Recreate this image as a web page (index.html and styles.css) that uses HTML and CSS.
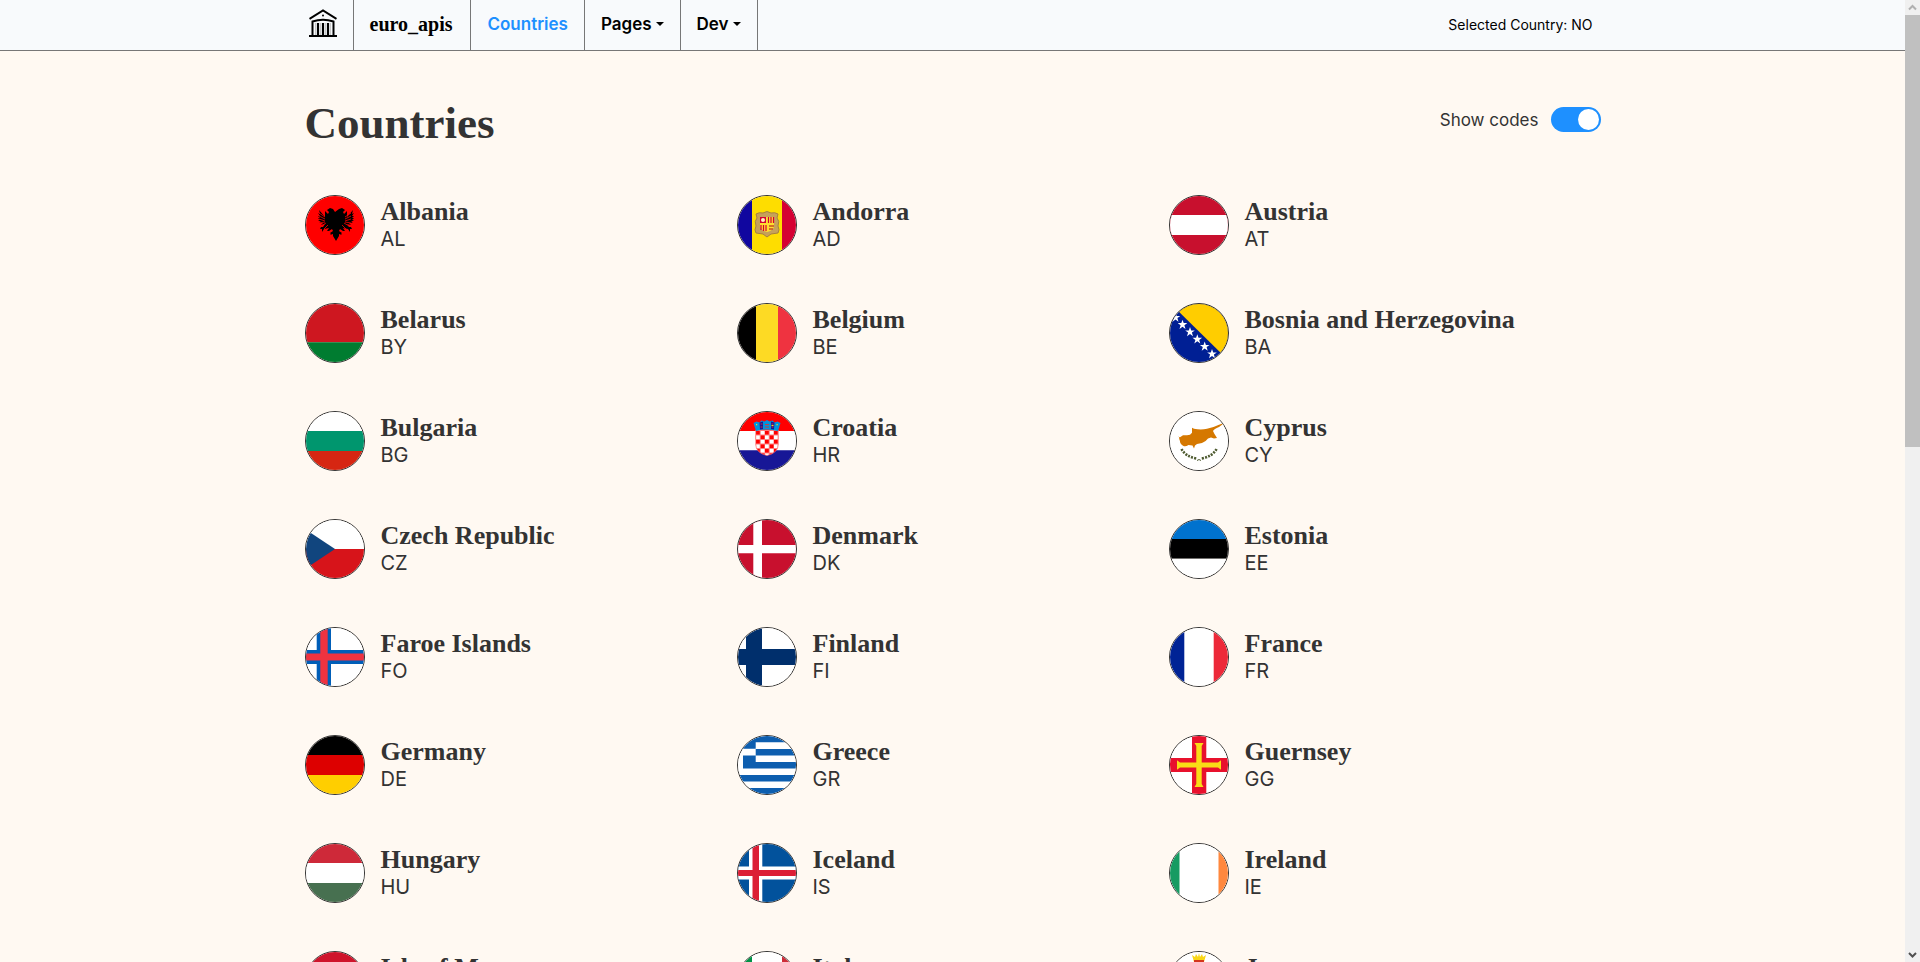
FILE: index.html
```html
<!DOCTYPE html>
<html lang="en">
<head>
<meta charset="utf-8">
<title>Countries</title>
<link rel="stylesheet" href="styles.css">
</head>
<body>
<div class="page">
<header class="navbar">
  <div class="container navbar-row">
    <nav class="nav">
      <a class="nav-item nav-logo" href="#" aria-label="Home">
        <svg width="28" height="28" viewBox="0 0 28 28" fill="none" stroke="#000" stroke-width="2"><path d="M.5 9.800 14 1.500 27.500 9.800"/><path d="M3.500 27V12.500Q14 9 24.500 12.500V27" stroke-width="2"/><path d="M9 14V26M14 14V26M19 14V26" stroke-width="2.200"/><path d="M6.500 14V26M11.500 14V26M16.500 14V26M21.500 14V26" stroke="#bbb" stroke-width=".8"/><path d="M0 27H28"/><circle cx="14" cy="6.500" r="1" fill="#000" stroke="none"/></svg>
      </a>
      <a class="nav-item nav-brand" href="#">euro_apis</a>
      <a class="nav-item nav-active" href="#">Countries</a>
      <button class="nav-item" type="button">Pages<span class="caret"></span></button>
      <button class="nav-item" type="button">Dev<span class="caret"></span></button>
    </nav>
    <div class="selected">Selected Country: NO</div>
  </div>
</header>
<main class="container main">
  <div class="heading">
    <h1 class="title">Countries</h1>
    <label class="toggle">Show codes<input class="switch" type="checkbox" role="switch" checked></label>
  </div>
  <div class="grid">
    <a class="country" href="#"><svg class="flag" viewBox="1 1 58 58"><path fill="red" d="M0 0h60v60H0z"/><path d="M30 17l-2-3-3-1-3 2 2 2-1 2-3-3v6l-6-7 1 4-2-1 2 3-2 0 2 2-2 0 2 2-2 0 3 2-2 1 4 0-2 2 4-1-2 3-2 0-1 2 2 0 0 3 2-3 5-1-2 3 2 0 3-2 1 2-3 2 1 1-1 1 3-1 0 2 3 5 3-5 0-2 3 1-1-1 1-1-3-2 1-2 3 2 2 0-2-3 5 1 2 3 0-3 2 0-1-2-2 0-2-3 4 1-2-2 4 0-2-1 3-2-2 0 2-2-2 0 2-2-2 0 2-3-2 1 1-4-6 7v-6l-3 3-1-2 2-2-3-2-3 1z"/><path stroke="red" stroke-width=".8" d="M14 18l6 4M14 21l6 3M14 24l6 2M14 28l6-1M16 31l5-3M19 34l4-4M46 18l-6 4M46 21l-6 3M46 24l-6 2M46 28l-6-1M44 31l-5-3M41 34l-4-4"/></svg><span class="info"><span class="name">Albania</span><span class="code">AL</span></span></a>
    <a class="country" href="#"><svg class="flag" viewBox="1 1 58 58"><path fill="#10069f" d="M0 0h15v60H0z"/><path fill="#fedd00" d="M15 0h30v60H15z"/><path fill="#d50032" d="M45 0h15v60H45z"/><path fill="#c6a15a" stroke="#a6803f" d="M19 19q3-2 7-1 4-3 8 0 4-1 7 1l-1 4q3 3 1 8 2 4 0 7l-7 1-4 3-4-3-7-1q-2-3 0-7-2-5 1-8z"/><path fill="#ffdd30" d="M23 22h14v9q0 4-7 6Q23 35 23 31z"/><path fill="#d50032" d="M23 22h6v6h-6z"/><circle cx="26" cy="25" r="2" fill="#fff5c0"/><path stroke="#d50032" stroke-width="1.200" d="M31.500 22v6M34 22v6M36.500 22v6M24 30v5M26.500 30v6M29 30v6"/><path stroke="#c64b22" stroke-width="1.500" d="M32 31h5M32 34h4"/></svg><span class="info"><span class="name">Andorra</span><span class="code">AD</span></span></a>
    <a class="country" href="#"><svg class="flag" viewBox="1 1 58 58"><path fill="#c8102e" d="M0 0h60v60H0z"/><path fill="#fff" d="M0 20h60v20H0z"/></svg><span class="info"><span class="name">Austria</span><span class="code">AT</span></span></a>

    <a class="country" href="#"><svg class="flag" viewBox="1 1 58 58"><path fill="#ce1720" d="M0 0h60v39.300H0z"/><path fill="#007c30" d="M0 39.300h60V60H0z"/></svg><span class="info"><span class="name">Belarus</span><span class="code">BY</span></span></a>
    <a class="country" href="#"><svg class="flag" viewBox="1 1 58 58"><path d="M0 0h19v60H0z"/><path fill="#fdda24" d="M19 0h22v60H19z"/><path fill="#ef3340" d="M41 0h19v60H41z"/></svg><span class="info"><span class="name">Belgium</span><span class="code">BE</span></span></a>
    <a class="country" href="#"><svg class="flag" viewBox="1 1 58 58"><defs><path id="star" fill="#fff" d="M0-5 1.200-1.600H4.800L1.900.6 3 4.200 0 2-3 4.200-1.900.6-4.800-1.600H-1.200z"/></defs><path fill="#001f94" d="M0 0h60v60H0z"/><path fill="#ffcd00" d="M1 0 60 58V0z"/><use href="#star" x="6.500" y="14.500"/><use href="#star" x="13.500" y="21.700"/><use href="#star" x="21" y="29"/><use href="#star" x="28.300" y="36.300"/><use href="#star" x="35.700" y="43.500"/><use href="#star" x="43" y="51"/></svg><span class="info"><span class="name">Bosnia and Herzegovina</span><span class="code">BA</span></span></a>

    <a class="country" href="#"><svg class="flag" viewBox="1 1 58 58"><path fill="#fff" d="M0 0h60v20H0z"/><path fill="#00966e" d="M0 20h60v20H0z"/><path fill="#d62612" d="M0 40h60v20H0z"/></svg><span class="info"><span class="name">Bulgaria</span><span class="code">BG</span></span></a>
    <a class="country" href="#"><svg class="flag" viewBox="1 1 58 58"><defs><pattern id="checks" x="18.750" y="19.500" width="9" height="9" patternUnits="userSpaceOnUse"><path fill="#fff" d="M0 0h9v9H0z"/><path fill="red" d="M0 0h4.500v4.500H0zM4.500 4.500H9V9H4.500z"/></pattern></defs><path fill="red" d="M0 0h60v20H0z"/><path fill="#fff" d="M0 20h60v19.300H0z"/><path fill="#171796" d="M0 39.300h60V60H0z"/><path fill="url(#checks)" stroke="#ff6a6a" stroke-width=".7" d="M18.700 19h22.600v14q0 9-11.300 11.500Q18.700 42 18.700 33z"/><path fill="#0093dd" d="M16.500 12l3-1.500 3 1 2-2 3 1 2.500-1.500 2.500 1.500 3-1 2 2 3-1 3 1.500-2.500 8q-11-3-22 0z"/><path fill="#171796" d="M22.500 11.500l3.500-1v7.500l-3 .5zM34 10.500l3.500 1-.5 7-3-.5z"/><path stroke="#d33" stroke-width=".9" d="M23.500 13h2M23.500 16h2M28 13.500h4M28 16h4M34.500 13h2M34.500 16h2"/><path fill="#f7db17" d="M19 13h1.200v1.200H19zM39.500 13h1.200v1.200h-1.200zM34.500 14h2v1h-2z"/></svg><span class="info"><span class="name">Croatia</span><span class="code">HR</span></span></a>
    <a class="country" href="#"><svg class="flag" viewBox="1 1 58 58"><path fill="#fff" d="M0 0h60v60H0z"/><path fill="#d57800" d="M9 25.500l2 .8 3-2 4 0 3-.5 2-2v-5l2 1q7 1.200 13 0 7-1.500 12-4l6-2.300-6 4.500q-5 2-6 4l1.500 3 2.500 4-3 .5-3-1-3 1q-2 3-6 4.500l-5 1-2 1.500-1 3-1.500-3-4-.5q-3 2-5 1-3.500-2-3.700-5.500-.8-2-.8-4z"/><path fill="none" stroke="#4e5b31" stroke-width="2.600" stroke-dasharray="2 1.200" d="M12.500 38q4 7.500 15 9.500M47.500 38q-4 7.500-15 9.500"/><path fill="none" stroke="#4e5b31" d="M28 49.500l2-1 2 1"/></svg><span class="info"><span class="name">Cyprus</span><span class="code">CY</span></span></a>

    <a class="country" href="#"><svg class="flag" viewBox="1 1 58 58"><path fill="#fff" d="M0 0h60v30H0z"/><path fill="#d7141a" d="M0 30h60v30H0z"/><path fill="#11457e" d="M-15 0 30 30-15 60z"/></svg><span class="info"><span class="name">Czech Republic</span><span class="code">CZ</span></span></a>
    <a class="country" href="#"><svg class="flag" viewBox="1 1 58 58"><path fill="#c8102e" d="M0 0h60v60H0z"/><path fill="#fff" d="M16.300 0h8.700v60h-8.700zM0 26h60v8.300H0z"/></svg><span class="info"><span class="name">Denmark</span><span class="code">DK</span></span></a>
    <a class="country" href="#"><svg class="flag" viewBox="1 1 58 58"><path fill="#0072ce" d="M0 0h60v20H0z"/><path d="M0 20h60v19.700H0z"/><path fill="#fff" d="M0 39.700h60V60H0z"/></svg><span class="info"><span class="name">Estonia</span><span class="code">EE</span></span></a>

    <a class="country" href="#"><svg class="flag" viewBox="1 1 58 58"><path fill="#fff" d="M0 0h60v60H0z"/><path fill="#005eb8" d="M11.700 0H26v60H11.700zM0 23h60v14H0z"/><path fill="#ef3340" d="M15.300 0h7.400v60h-7.400zM0 26.500h60v7H0z"/></svg><span class="info"><span class="name">Faroe Islands</span><span class="code">FO</span></span></a>
    <a class="country" href="#"><svg class="flag" viewBox="1 1 58 58"><path fill="#fff" d="M0 0h60v60H0z"/><path fill="#002f6c" d="M9 0h16v60H9zM0 22h60v16H0z"/></svg><span class="info"><span class="name">Finland</span><span class="code">FI</span></span></a>
    <a class="country" href="#"><svg class="flag" viewBox="1 1 58 58"><path fill="#fff" d="M0 0h60v60H0z"/><path fill="#002395" d="M0 0h15.300v60H0z"/><path fill="#ed2939" d="M44.700 0H60v60H44.700z"/></svg><span class="info"><span class="name">France</span><span class="code">FR</span></span></a>

    <a class="country" href="#"><svg class="flag" viewBox="1 1 58 58"><path d="M0 0h60v20H0z"/><path fill="#d00" d="M0 20h60v20H0z"/><path fill="#ffce00" d="M0 40h60v20H0z"/></svg><span class="info"><span class="name">Germany</span><span class="code">DE</span></span></a>
    <a class="country" href="#"><svg class="flag" viewBox="1 1 58 58"><path fill="#fff" d="M0 0h60v60H0z"/><path fill="#0d5eaf" d="M0 0h60v7.200H0zM18.700 14H60v6.400H18.700zM18.700 27H60v6.400H18.700zM0 40h60v6.400H0zM0 53h60v7H0zM0 7h18.700v6.700H0zM6 20.500h12.700v12.900H6z"/></svg><span class="info"><span class="name">Greece</span><span class="code">GR</span></span></a>
    <a class="country" href="#"><svg class="flag" viewBox="1 1 58 58"><path fill="#fff" d="M0 0h60v60H0z"/><path fill="#e8112d" d="M23 0h14.300v60H23zM0 23h60v14H0z"/><path fill="#f9dd16" d="M25.500 8h9l-1.800 3v16.500H49l3-2.200v9.400l-3-2.200H32.700V49l1.800 3h-9l1.800-3V32.500H11l-3 2.200v-9.400l3 2.200h16.300V11z"/></svg><span class="info"><span class="name">Guernsey</span><span class="code">GG</span></span></a>

    <a class="country" href="#"><svg class="flag" viewBox="1 1 58 58"><path fill="#ce2939" d="M0 0h60v20H0z"/><path fill="#fff" d="M0 20h60v20H0z"/><path fill="#477050" d="M0 40h60v20H0z"/></svg><span class="info"><span class="name">Hungary</span><span class="code">HU</span></span></a>
    <a class="country" href="#"><svg class="flag" viewBox="1 1 58 58"><path fill="#02529c" d="M0 0h60v60H0z"/><path fill="#fff" d="M12 0h13.300v60H12zM0 23.500h60v13H0z"/><path fill="#dc1e35" d="M15.500 0H22v60h-6.500zM0 27h60v6H0z"/></svg><span class="info"><span class="name">Iceland</span><span class="code">IS</span></span></a>
    <a class="country" href="#"><svg class="flag" viewBox="1 1 58 58"><path fill="#fff" d="M0 0h60v60H0z"/><path fill="#169b62" d="M0 0h10.500v60H0z"/><path fill="#ff883e" d="M49.500 0H60v60H49.500z"/></svg><span class="info"><span class="name">Ireland</span><span class="code">IE</span></span></a>

    <a class="country" href="#"><svg class="flag" viewBox="1 1 58 58"><path fill="#cf142b" d="M0 0h60v60H0z"/></svg><span class="info"><span class="name">Isle of Man</span><span class="code">IM</span></span></a>
    <a class="country" href="#"><svg class="flag" viewBox="1 1 58 58"><path fill="#fff" d="M0 0h60v60H0z"/><path fill="#009246" d="M0 0h15v60H0z"/><path fill="#ce2b37" d="M45 0h15v60H45z"/></svg><span class="info"><span class="name">Italy</span><span class="code">IT</span></span></a>
    <a class="country" href="#"><svg class="flag" viewBox="1 1 58 58"><path fill="#fff" d="M0 0h60v60H0z"/><path fill="#f9d616" d="M23 4l3 2 1-3 2 3 1-4 1 4 2-3 1 3 3-2-2 7H25z"/><path fill="#d4351c" d="M25 9h10v6H25z"/></svg><span class="info"><span class="name">Jersey</span><span class="code">JE</span></span></a>
  </div>
</main>
</div>
<div class="scrollbar" aria-hidden="true">
  <svg class="arrow" viewBox="0 0 15 15"><path d="M4 9.500 7.500 6 11 9.500" fill="none" stroke="#b0b0b0" stroke-width="2"/></svg>
  <div class="track"><div class="thumb"></div></div>
  <svg class="arrow" viewBox="0 0 15 15"><path d="M4 6 7.500 9.500 11 6" fill="none" stroke="#505050" stroke-width="2"/></svg>
</div>
</body>
</html>
```
FILE: styles.css
```css
* { box-sizing: border-box; }
body {
  margin: 0;
  height: 100vh;
  display: flex;
  overflow: hidden;
  background: #fff9f2;
  color: #333;
  font-family: Inter, "Open Sans", sans-serif;
  font-size: 17px;
}
a { color: inherit; text-decoration: none; }
.page {
  flex: 1;
  min-width: 0;
  overflow-y: auto;
  scrollbar-width: none;
}
.container {
  width: 100%;
  max-width: 1320px;
  margin: 0 auto;
  padding: 0 12px;
}
.main { padding-bottom: 48px; }
.navbar {
  background: #f8fafc;
  border-bottom: 1px solid #777;
  color: #000;
}
.navbar-row {
  display: flex;
  justify-content: space-between;
  align-items: center;
}
.nav { display: flex; height: 50px; }
.nav-item {
  display: flex;
  align-items: center;
  justify-content: center;
  padding: 0 16px 2px;
  border: 0;
  border-right: 1px solid #777;
  background: none;
  color: #000;
  font: 600 17px Inter, "Open Sans", sans-serif;
}
.nav-logo { padding: 0 16px 4px 4px; }
.nav-brand {
  padding-right: 18px;
  font: 700 20px "Liberation Serif", serif;
}
.nav-active { color: #1e90ff; }
.caret {
  margin-left: 4px;
  border: 4px solid transparent;
  border-top-color: #000;
  border-bottom: 0;
}
.selected { padding: 0 8px 2px 0; font-size: 14px; }
.heading {
  display: flex;
  justify-content: space-between;
  align-items: flex-start;
  padding: 48px 0;
}
.title {
  margin: 0;
  font: 700 45px/48px "Liberation Serif", serif;
}
.toggle {
  display: flex;
  align-items: center;
  gap: 12px;
  padding-top: 8px;
}
.switch {
  appearance: none;
  width: 50px;
  height: 25px;
  margin: 0;
  padding: 2px;
  border-radius: 13px;
  background: #1e90ff;
}
.switch::before {
  content: "";
  display: block;
  width: 21px;
  height: 21px;
  margin-left: auto;
  border-radius: 50%;
  background: #fff;
}
.grid {
  display: grid;
  grid-template-columns: repeat(3, 1fr);
  row-gap: 48px;
}
.country { display: flex; align-items: center; gap: 16px; }
.flag {
  flex: none;
  width: 60px;
  height: 60px;
  border: 1px solid #333;
  border-radius: 50%;
}
.info {
  display: flex;
  flex-direction: column;
  padding-bottom: 2px;
}
.name { font: 700 26px/30px "Liberation Serif", serif; }
.code { font-size: 20px; line-height: 24px; }
.scrollbar {
  flex: none;
  width: 15px;
  display: flex;
  flex-direction: column;
  background: #f0f0f0;
}
.arrow { flex: none; width: 15px; height: 15px; }
.track { flex: 1; }
.thumb { height: 46.3%; background: #c0c0c0; }
```
